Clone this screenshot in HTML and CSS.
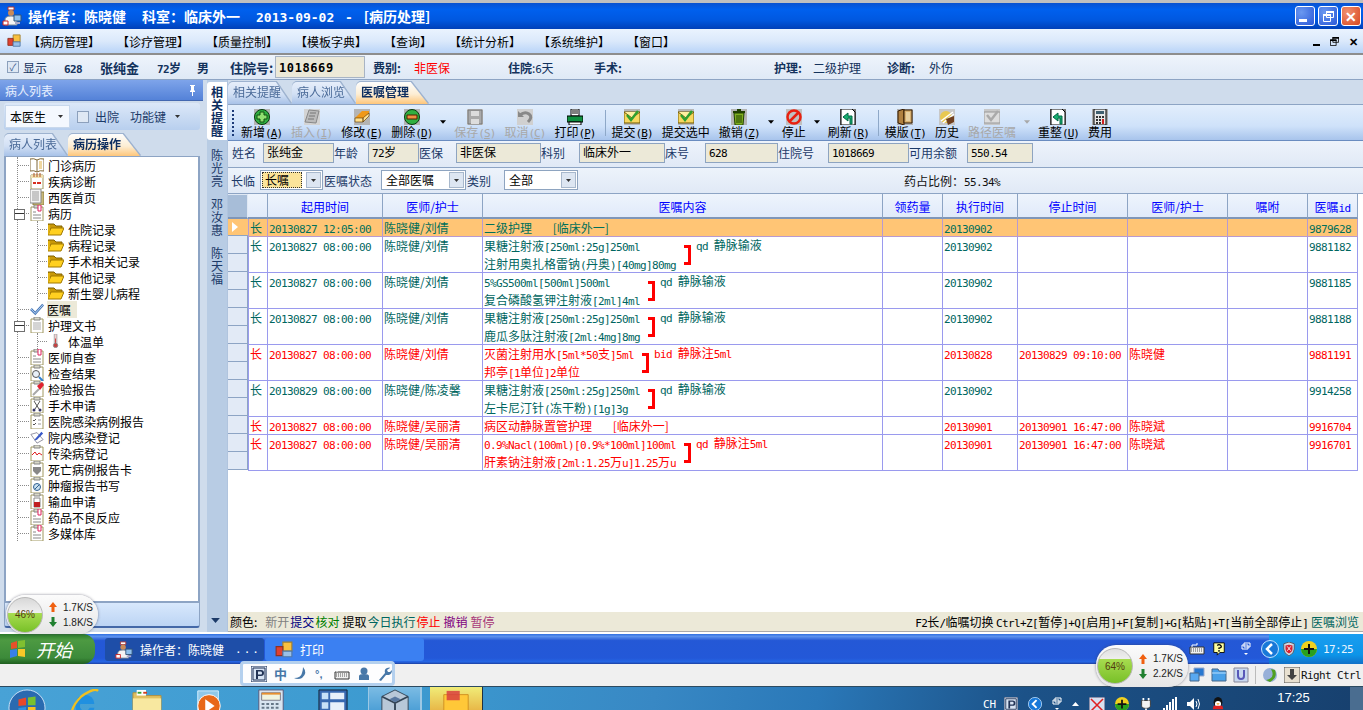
FILE: index.html
```html
<!DOCTYPE html>
<html lang="zh-CN">
<head>
    <meta charset="UTF-8">
    <title>病历处理</title>
    <link rel="stylesheet" href="styles.css">
</head>
<body>

<svg class="defs" width="0" height="0">
    <symbol id="i-doctor" viewBox="0 0 20 20"><path d="M6 1h6v3H6z" fill="#fff" stroke="#a33"/><circle cx="9" cy="7" r="3" fill="#c88a58"/><path d="M3 19v-5q0-4 6-4t6 4v5z" fill="#f4f4f4" stroke="#789"/><path d="M1 15h5v4H1z" fill="#fff" stroke="#c22"/><path d="M12 9h7v6h-7z" fill="#8ec0ee" stroke="#357"/><path d="M13 16h5v2h-5z" fill="#aac"/></symbol>
    <symbol id="i-app" viewBox="0 0 16 16"><path d="M7 1h8v8H7z" fill="#f8c040" stroke="#a08030"/><path d="M1 5h6v8H1z" fill="#e04030" stroke="#903020"/><path d="M7 9h8v5H7z" fill="#9ac0e8" stroke="#5078a8"/></symbol>
    <symbol id="i-arrow" viewBox="0 0 7 4"><path d="M0 0h7L3.500 4z"/></symbol>
    <symbol id="i-restore" viewBox="0 0 11 11"><path d="M3.500.5h7v6h-7zM.5 3.500h7v7h-7z" fill="none" stroke="currentColor"/><path d="M3 0h8v2H3zM0 3h8v2H0z" fill="currentColor"/></symbol>
    <symbol id="i-pin" viewBox="0 0 9 11"><path d="M2 0h5v1H6v4l1 1v1H5v4H4V7H2V6l1-1V1H2z" fill="#fff"/></symbol>
    <symbol id="i-up" viewBox="0 0 8 10"><path d="M4 0l4 5H5.500v5h-3V5H0z"/></symbol>
    <symbol id="i-down" viewBox="0 0 8 10"><path d="M4 10L0 5h2.500V0h3v5H8z"/></symbol>

    <symbol id="t-add" viewBox="0 0 16 16"><path d="M0 0h16v16H0z" fill="#b4b4b4"/><circle cx="8" cy="8" r="7.500" fill="#30b040" stroke="#0a3a10"/><path d="M6 3h4v3h3v4h-3v3H6v-3H3V6h3z" fill="#90e070" stroke="#105010"/></symbol>
    <symbol id="t-insert" viewBox="0 0 16 16"><path d="M0 0h16v16H0z" fill="#d4d4d4"/><path d="M5 1l10 1-3 12L1 13z" fill="#bbb" stroke="#888"/><path d="M6 4h6M5 7h6M4 10h6" stroke="#777"/></symbol>
    <symbol id="t-edit" viewBox="0 0 16 16"><path d="M0 0h16v16H0z" fill="#b4b4b4"/><path d="M1 9l7-7h7v5l-6 6H1z" fill="#f09818"/><path d="M1 9h8v4H1zM9 9l6-5v3l-6 6z" fill="#ffe090" stroke="#553300" stroke-width=".6"/></symbol>
    <symbol id="t-del" viewBox="0 0 16 16"><path d="M0 0h16v16H0z" fill="#b4b4b4"/><circle cx="8" cy="8" r="7.500" fill="#30b040" stroke="#0a3a10"/><path d="M3 6h10v4H3z" fill="#f09040" stroke="#502000"/></symbol>
    <symbol id="t-save" viewBox="0 0 16 16"><path d="M0 0h16v16H0z" fill="#c8c8c8"/><path d="M1 1h14v14H1z" fill="#aaa" stroke="#777"/><path d="M4 2h8v5H4zM4 10h8v5H4z" fill="#ddd"/></symbol>
    <symbol id="t-undo" viewBox="0 0 16 16"><path d="M0 0h16v16H0z" fill="#d0d0d0"/><path d="M3 6q5-4 9-1t-1 8" fill="none" stroke="#888" stroke-width="3"/><path d="M1 2v6h6z" fill="#888"/></symbol>
    <symbol id="t-print" viewBox="0 0 16 16"><path d="M4 0h8v7H4z" fill="#fff" stroke="#000"/><path d="M5 2h6M5 4h6" stroke="#000"/><path d="M0 7h16v6H0z" fill="#109040" stroke="#000"/><path d="M2 13h12v3H2z" fill="#fff" stroke="#000"/></symbol>
    <symbol id="t-submit" viewBox="0 0 16 16"><path d="M0 0h16v16H0z" fill="#b8b8b8"/><path d="M0 3h16v11H0z" fill="#f8d860" stroke="#705800"/><path d="M0 3l8 6 8-6" fill="#fff0a0" stroke="#705800"/><path d="M3 6l4 5 7-9" fill="none" stroke="#30a030" stroke-width="2.500"/></symbol>
    <symbol id="t-trash" viewBox="0 0 16 16"><path d="M0 0h16v16H0z" fill="#b4b4b4"/><path d="M6 0h4v2H6zM2 2h12v2H2z" fill="#204000"/><path d="M3 4h10l-1 12H4z" fill="#80b020" stroke="#204000"/><path d="M6 6v8M8 6v8M10 6v8" stroke="#204000"/></symbol>
    <symbol id="t-stop" viewBox="0 0 16 16"><path d="M0 0h16v16H0z" fill="#c0c0c0"/><circle cx="8" cy="8" r="6.500" fill="none" stroke="#e82010" stroke-width="2.500"/><path d="M3.500 12.500l9-9" stroke="#e82010" stroke-width="2.500"/></symbol>
    <symbol id="t-refresh" viewBox="0 0 16 16"><path d="M0 0h16v16H0z" fill="#777"/><path d="M1 0h11l3 3v13H1z" fill="#fff" stroke="#000"/><path d="M12 15V7H8V4L3 8l5 4V9h2v6z" fill="#18b070" stroke="#064"/></symbol>
    <symbol id="t-book" viewBox="0 0 16 16"><path d="M0 0h16v16H0z" fill="#b0b0b0"/><path d="M1 2l6-2v16l-6-2z" fill="#b08040" stroke="#301800"/><path d="M7 1h8v13H7z" fill="#d8b070" stroke="#301800"/><path d="M9 3h4v9H9z" fill="#e8d0a0"/></symbol>
    <symbol id="t-history" viewBox="0 0 16 16"><path d="M0 0h16v16H0z" fill="#c8c8c8"/><circle cx="7" cy="8" r="6" fill="#e8c850"/><path d="M2 12l12-9M4 14L15 5" stroke="#fff" stroke-width="1.500"/><path d="M7 10l8-3v6l-6 3z" fill="#704020"/></symbol>
    <symbol id="t-route" viewBox="0 0 16 16"><path d="M0 0h16v16H0z" fill="#c8c8c8"/><path d="M0 3h16v11H0z" fill="#ddd" stroke="#999"/><path d="M3 6l4 5 7-9" fill="none" stroke="#aaa" stroke-width="2.500"/></symbol>
    <symbol id="t-calc" viewBox="0 0 16 16"><path d="M0 0h16v16H0z" fill="#aaa"/><path d="M2 0h12v16H2z" fill="#e8e8e8" stroke="#000"/><path d="M4 2h8v3H4z" fill="#406070"/><path d="M4 7h2v2H4zM7 7h2v2H7zM10 7h2v2h-2zM4 10h2v2H4zM7 10h2v2H7zM4 13h2v2H4zM7 13h2v2H7z" fill="#333"/><path d="M10 10h2v5h-2z" fill="#d02020"/></symbol>

    <symbol id="n-clip" viewBox="0 0 14 16"><path d="M1 2h12v14H1z" fill="#fff" stroke="#a09860"/><path d="M4 0h6v3H4z" fill="#d8d8c8" stroke="#888"/></symbol>
    <symbol id="n-book" viewBox="0 0 14 16"><path d="M7 3Q4 1 0 2v12q4-1 7 1 3-2 7-1V2Q10 1 7 3z" fill="#fff" stroke="#806838"/><path d="M7 3v12" stroke="#806838"/><path d="M9 4h3v8H9z" fill="#f0d8a0"/></symbol>
    <symbol id="n-cal" viewBox="0 0 14 16"><path d="M1 2h12v14H1z" fill="#fff" stroke="#a09860"/><path d="M1 2h12v3H1z" fill="#f0e0b0"/><path d="M4 0v4M7 0v4M10 0v4" stroke="#b05020"/><path d="M3 9h3v2H3z" fill="#d83020"/><path d="M7 9h4v2H7z" fill="#d83020"/></symbol>
    <symbol id="n-doc" viewBox="0 0 14 16"><path d="M3 3h11v13H3z" fill="#c8b878" stroke="#908040"/><path d="M0 0h11v14H0z" fill="#f4f4f4" stroke="#888"/><path d="M2 3h7M2 5h7M2 7h7M2 9h7M2 11h7" stroke="#999"/></symbol>
    <symbol id="n-rec" viewBox="0 0 14 16"><use href="#n-clip"/><path d="M3 7h3M3 10h8M3 13h8" stroke="#888"/><path d="M8 0h3v6H8z" fill="#fff" stroke="#e02060"/></symbol>
    <symbol id="n-plain" viewBox="0 0 14 16"><use href="#n-clip"/><path d="M3 6h8M3 8h8M3 10h8M3 12h8" stroke="#aaa"/></symbol>
    <symbol id="n-folder" viewBox="0 0 16 14"><path d="M0 2h6l2 2h6v3H0z" fill="#c89808" stroke="#806000"/><path d="M0 13L3 6h13l-3 7z" fill="#ffd020" stroke="#a07800"/><path d="M0 13V3h2v6z" fill="#e0b010"/></symbol>
    <symbol id="n-check" viewBox="0 0 16 14"><path d="M1 7l5 5L15 2" fill="none" stroke="#4878b8" stroke-width="3"/><path d="M1 7l5 5L15 2" fill="none" stroke="#c0dcf8"/></symbol>
    <symbol id="n-thermo" viewBox="0 0 14 16"><path d="M5 0h3v11H5z" fill="#f4d0d0" stroke="#a8a8a8"/><path d="M6 5h1v7H6z" fill="#d03030"/><circle cx="6.500" cy="13" r="2.500" fill="#c84040" stroke="#888"/></symbol>
    <symbol id="n-search" viewBox="0 0 14 16"><use href="#n-clip"/><circle cx="6" cy="9" r="3.500" fill="#e8f0f8" stroke="#555"/><path d="M9 12l4 4" stroke="#3080d0" stroke-width="2"/></symbol>
    <symbol id="n-pin" viewBox="0 0 14 16"><use href="#n-clip"/><path d="M3 14L9 8" stroke="#a8a8a8" stroke-width="2"/><path d="M7 5l5-4 2 3-4 5z" fill="#e02030"/></symbol>
    <symbol id="n-scissor" viewBox="0 0 14 16"><use href="#n-clip"/><path d="M4 4l5 8M10 4l-5 8" stroke="#555"/><circle cx="4" cy="13" r="1.500" fill="#336"/><circle cx="10" cy="13" r="1.500" fill="#336"/></symbol>
    <symbol id="n-list" viewBox="0 0 14 16"><use href="#n-clip"/><path d="M3 7l1 1 2-2M3 11l1 1 2-2" fill="none" stroke="#555"/><path d="M8 7h3M8 11h3" stroke="#999"/></symbol>
    <symbol id="n-pen" viewBox="0 0 16 16"><path d="M1 5l7-2 7 8-7 4z" fill="#fff" stroke="#889"/><path d="M6 10l7-8 2 2-7 7-3 1z" fill="#3858c8"/></symbol>
    <symbol id="n-wave" viewBox="0 0 14 16"><use href="#n-clip"/><path d="M2 10l3-3 2 3 2-2 3 2" fill="none" stroke="#e02020"/></symbol>
    <symbol id="n-heart" viewBox="0 0 14 16"><use href="#n-clip"/><path d="M3 6h8v4l-4 4-4-4z" fill="#888"/></symbol>
    <symbol id="n-target" viewBox="0 0 14 16"><use href="#n-clip"/><circle cx="7" cy="10" r="3.500" fill="#c8e0f0" stroke="#306090"/><path d="M5 12l4-4" stroke="#306090"/></symbol>
    <symbol id="n-blood" viewBox="0 0 14 16"><use href="#n-clip"/><path d="M4 5h6v9H4z" fill="#fff" stroke="#888"/><path d="M4 9h6v5H4z" fill="#c02020"/></symbol>

    <symbol id="s-kbd" viewBox="0 0 16 12"><path d="M1 4h14v7H1z" fill="#f0f0f0" stroke="#333"/><path d="M2 6h12M2 8h12" stroke="#555" stroke-dasharray="1 1"/><path d="M3 4V2h5V0" fill="none" stroke="#fff"/></symbol>
    <symbol id="s-help" viewBox="0 0 14 16"><path d="M1 1h12v11H8l-3 3v-3H1z" fill="#ffffa0" stroke="#000"/><path d="M5 4q2-2 4 0t-2 3v1M7 9v2" fill="none" stroke="#000" stroke-width="1.500"/></symbol>
    <symbol id="s-restore" viewBox="0 0 10 14"><path d="M3 1h6v4H3zM1 3h6v4H1z" fill="none" stroke="#fff"/><path d="M3 11h4l-2 2z" fill="#fff"/></symbol>
    <symbol id="s-back" viewBox="0 0 18 18"><circle cx="9" cy="9" r="8.500" fill="#1878d8" stroke="#c0e0ff"/><path d="M11 4L6 9l5 5" fill="none" stroke="#fff" stroke-width="2.500"/></symbol>
    <symbol id="s-shield" viewBox="0 0 14 16"><path d="M1 2l6-2 6 2v6q0 5-6 8-6-3-6-8z" fill="#d0d8e0" stroke="#456"/><path d="M3 4l4-1 4 1v4q0 3-4 5-4-2-4-5z" fill="#d82030"/><path d="M5 5l4 5M9 5l-4 5" stroke="#fff"/></symbol>
    <symbol id="s-plus" viewBox="0 0 16 16"><circle cx="8" cy="8" r="8" fill="#f0d020"/><path d="M0 8a8 8 0 0 0 16 0z" fill="#28a020"/><path d="M7 3h2v4h4v2H9v4H7V9H3V7h4z" fill="#111"/></symbol>
    <symbol id="s-net" viewBox="0 0 16 16"><path d="M5 1h10v8H5z" fill="#2878d0" stroke="#9ac"/><path d="M1 6h9v8H1z" fill="#58a8f0" stroke="#468"/></symbol>
    <symbol id="s-share" viewBox="0 0 16 14"><path d="M1 1h6l1 2h7v10H1z" fill="#48a0e8" stroke="#468"/><path d="M1 5h14" stroke="#b8e0ff"/></symbol>
    <symbol id="s-usb" viewBox="0 0 16 16"><path d="M1 1h14v14H1z" fill="#c8d8f0" stroke="#889"/><path d="M5 3v6a3 3 0 0 0 6 0V3" fill="none" stroke="#5858b8" stroke-width="2"/></symbol>
    <symbol id="s-swirl" viewBox="0 0 16 16"><circle cx="8" cy="8" r="7" fill="#98b0d8"/><path d="M4 13Q14 11 9 2l4 1q3 8-5 12z" fill="#50a020"/></symbol>
    <symbol id="s-box" viewBox="0 0 16 16"><path d="M0 0h16v16H0z" fill="#e8e0d0" stroke="#555"/><path d="M6 2h4v6h3l-5 5-5-5h3z" fill="#444"/></symbol>
    <symbol id="s-ime-p" viewBox="0 0 16 16"><path d="M0 0h16v16H0z" fill="#d8e4f4" stroke="#235"/><path d="M2 2h12v12H2z" fill="none" stroke="#235"/><path d="M5 4h5q3 0 3 3t-3 3H7v3H5zM7 5.500v3h3q1 0 1-1.500t-1-1.500z" fill="#235"/></symbol>
    <symbol id="s-moon" viewBox="0 0 14 14"><path d="M9 0q5 6-1 11-4 2-8 0 7 0 8-5 1-3 1-6z" fill="#4878a8"/></symbol>
    <symbol id="s-user" viewBox="0 0 12 14"><circle cx="6" cy="4" r="3.500" fill="#4878a8"/><path d="M1 13V9q0-2 5-2t5 2v4z" fill="#4878a8"/></symbol>
    <symbol id="s-wrench" viewBox="0 0 14 14"><path d="M1 13l6-7q-1-4 2-5t3 0L9 3l1 2 2 0 2-2q0 4-3 5-2 0-3 0l-5 6z" fill="#4878a8"/></symbol>
    <symbol id="s-qq" viewBox="0 0 14 16"><ellipse cx="7" cy="6" rx="5" ry="6" fill="#111"/><ellipse cx="7" cy="8" rx="3.500" ry="3.500" fill="#fff"/><path d="M2 10h10l1 4H1z" fill="#e02020"/><path d="M5 7l2 2 2-2z" fill="#f0a020"/></symbol>
    <symbol id="s-xbox" viewBox="0 0 16 16"><path d="M0 0h16v16H0z" fill="#d8e0f0" stroke="#446"/><path d="M2 2l12 12M14 2L2 14" stroke="#e02020" stroke-width="1.500"/></symbol>
    <symbol id="s-plug" viewBox="0 0 14 16"><path d="M2 4h10v6q0 3-5 3t-5-3z" fill="#f4f4f4" stroke="#333"/><path d="M4 1v3M10 1v3M7 13v3" stroke="#fff" stroke-width="2"/></symbol>
    <symbol id="s-bars" viewBox="0 0 14 14"><path d="M0 11h2v3H0zM3 8h2v6H3zM6 5h2v9H6zM9 2h2v12H9zM12 0h2v14h-2z" fill="#fff"/></symbol>
    <symbol id="s-vol" viewBox="0 0 14 14"><path d="M0 5h3l4-4v12l-4-4H0z" fill="#fff"/><path d="M9 4q2 3 0 6M11 2q3 5 0 10" fill="none" stroke="#fff"/></symbol>

    <symbol id="w-orb" viewBox="0 0 40 40"><circle cx="20" cy="20" r="19" fill="#2a6ab0" stroke="#cfe4f8"/><path d="M11 11l8-2v8l-8 1z" fill="#e8482a"/><path d="M21 9l8-1v9l-8 0z" fill="#78c030"/><path d="M11 20l8-1v8l-8 2z" fill="#3090e0"/><path d="M21 19h8v9l-8-2z" fill="#f8c020"/></symbol>
    <symbol id="w-ie" viewBox="0 0 32 32"><path d="M6 16a10 10 0 0 1 20 0H11a5 5 0 0 0 10 4h5a10 10 0 0 1-20-4z" fill="#2090e0"/><path d="M2 30Q0 20 12 8 26-2 30 2" fill="none" stroke="#f0c020" stroke-width="2.500"/></symbol>
    <symbol id="w-folder" viewBox="0 0 32 32"><path d="M1 4h12l2 3h16v22H1z" fill="#e0c060" stroke="#b09040"/><path d="M1 10h30v19H1z" fill="#f8e8a0"/><path d="M5 1h10v6H5z" fill="#fff"/><path d="M6 3h4v2H6z" fill="#30a030"/><path d="M12 3h4v2h-4z" fill="#d04020"/></symbol>
    <symbol id="w-media" viewBox="0 0 32 32"><path d="M4 2h22v28H4z" fill="#90c8e8" stroke="#d8f0ff"/><circle cx="16" cy="18" r="12" fill="#e86818" stroke="#fff"/><path d="M12 11l10 7-10 7z" fill="#fff"/></symbol>
    <symbol id="w-calc" viewBox="0 0 32 32"><path d="M3 1h26v30H3z" fill="#d8e4f0" stroke="#557"/><path d="M6 4h20v8H6z" fill="#f0f4e0" stroke="#778"/><path d="M6 4h20v2H6z" fill="#e89030"/><path d="M6 15h3v2H6zM11 15h3v2h-3zM16 15h3v2h-3zM21 15h3v2h-3zM6 19h3v2H6zM11 19h3v2h-3zM16 19h3v2h-3zM21 19h3v2h-3z" fill="#678"/></symbol>
    <symbol id="w-exp" viewBox="0 0 32 32"><path d="M1 1h30v30H1z" fill="#3868b0" stroke="#123"/><path d="M4 4h7v7H4zM4 14h7v7H4z" fill="#c8e0f8"/><path d="M13 4h15v7H13zM13 14h15v12H13z" fill="#e8f0fa"/></symbol>
    <symbol id="w-vbox" viewBox="0 0 32 32"><path d="M16 1l14 7v16l-14 7-14-7V8z" fill="#b8c8d8" stroke="#345"/><path d="M2 8l14 7 14-7M16 15v16" fill="none" stroke="#345" stroke-width="2"/><path d="M16 8l6 3-6 3-6-3z" fill="#5878a0"/></symbol>
    <symbol id="w-note" viewBox="0 0 32 32"><path d="M3 6h26v26H3z" fill="#ffc838" stroke="#d09020"/><path d="M6 2h14v10H6z" fill="#d84040" opacity=".85"/></symbol>
</svg>

<div class="app">
    <div class="top-strip"></div>

    <header class="titlebar">
        <svg class="title-icon"><use href="#i-doctor"/></svg>
        <div class="title-text">
            <span>操作者：陈晓健</span><span>科室：临床外一</span><span><code>2013-09-02 - </code>[病历处理]</span>
        </div>
        <div class="win-buttons">
            <span class="win-btn"><i class="glyph-min"></i></span>
            <span class="win-btn"><svg class="glyph-max"><use href="#i-restore"/></svg></span>
            <span class="win-btn close"><i class="glyph-close">✕</i></span>
        </div>
    </header>

    <nav class="menubar">
        <svg class="menu-icon"><use href="#i-app"/></svg>
        <ul class="menu-list">
            <li>【病历管理】</li>
            <li>【诊疗管理】</li>
            <li>【质量控制】</li>
            <li>【模板字典】</li>
            <li>【查询】</li>
            <li>【统计分析】</li>
            <li>【系统维护】</li>
            <li>【窗口】</li>
        </ul>
        <div class="mdi-buttons">
            <i class="mdi-min"></i><svg class="mdi-max"><use href="#i-restore"/></svg><i class="mdi-close">✕</i>
        </div>
    </nav>

    <section class="patient-bar">
        <span class="check checked">✓</span>
        <span>显示</span>
        <b><code>628</code></b>
        <b class="big">张纯金</b>
        <b><code>72</code>岁</b>
        <b>男</b>
        <b class="big">住院号:</b>
        <span class="patient-no"><code>1018669</code></span>
        <b>费别:</b>
        <span class="red">非医保</span>
        <span><b>住院</b>:<code>6</code>天</span>
        <b>手术:</b>
        <b>护理:</b>
        <span>二级护理</span>
        <b>诊断:</b>
        <span>外伤</span>
    </section>

    <main class="workspace">
        <aside class="left-panel">
            <div class="panel-head">病人列表<svg class="pin"><use href="#i-pin"/></svg></div>
            <div class="panel-tools">
                <span class="doctor-combo">本医生<svg class="arrow"><use href="#i-arrow"/></svg></span>
                <span class="check"></span>
                <span>出院</span>
                <span class="fn-key">功能键</span>
                <svg class="arrow"><use href="#i-arrow"/></svg>
            </div>
            <div class="tabs small">
                <span class="tab">病人列表</span>
                <span class="tab active">病历操作</span>
            </div>
            <div class="tree-box">
                <ul class="tree">
                    <li><svg class="node"><use href="#n-book"/></svg>门诊病历</li>
                    <li><svg class="node"><use href="#n-cal"/></svg>疾病诊断</li>
                    <li><svg class="node"><use href="#n-doc"/></svg>西医首页</li>
                    <li class="open"><svg class="node"><use href="#n-rec"/></svg>病历</li>
                    <li class="sub">
                        <ul>
                            <li><svg class="node"><use href="#n-folder"/></svg>住院记录</li>
                            <li><svg class="node"><use href="#n-folder"/></svg>病程记录</li>
                            <li><svg class="node"><use href="#n-folder"/></svg>手术相关记录</li>
                            <li><svg class="node"><use href="#n-folder"/></svg>其他记录</li>
                            <li><svg class="node"><use href="#n-folder"/></svg>新生婴儿病程</li>
                        </ul>
                    </li>
                    <li class="current"><svg class="node"><use href="#n-check"/></svg><span>医嘱</span></li>
                    <li class="open"><svg class="node"><use href="#n-plain"/></svg>护理文书</li>
                    <li class="sub">
                        <ul>
                            <li><svg class="node"><use href="#n-thermo"/></svg>体温单</li>
                        </ul>
                    </li>
                    <li><svg class="node"><use href="#n-rec"/></svg>医师自查</li>
                    <li><svg class="node"><use href="#n-search"/></svg>检查结果</li>
                    <li><svg class="node"><use href="#n-pin"/></svg>检验报告</li>
                    <li><svg class="node"><use href="#n-scissor"/></svg>手术申请</li>
                    <li><svg class="node"><use href="#n-list"/></svg>医院感染病例报告</li>
                    <li><svg class="node"><use href="#n-pen"/></svg>院内感染登记</li>
                    <li><svg class="node"><use href="#n-wave"/></svg>传染病登记</li>
                    <li><svg class="node"><use href="#n-heart"/></svg>死亡病例报告卡</li>
                    <li><svg class="node"><use href="#n-target"/></svg>肿瘤报告书写</li>
                    <li><svg class="node"><use href="#n-blood"/></svg>输血申请</li>
                    <li><svg class="node"><use href="#n-rec"/></svg>药品不良反应</li>
                    <li><svg class="node"><use href="#n-rec"/></svg>多媒体库</li>
                </ul>
            </div>
            <div class="panel-foot"></div>
        </aside>

        <div class="side-tabs">
            <span class="side-tab active">相关提醒</span>
            <span class="side-tab">陈光亮</span>
            <span class="side-tab">邓汝惠</span>
            <span class="side-tab">陈天福</span>
            <svg class="side-scroll"><use href="#i-arrow"/></svg>
        </div>

        <div class="right-pane">
            <div class="tabs">
                <span class="tab">相关提醒</span>
                <span class="tab">病人浏览</span>
                <span class="tab active">医嘱管理</span>
            </div>

            <div class="toolbar">
                <span class="grip"></span>
                <button class="tool"><svg><use href="#t-add"/></svg><span>新增<code>(<u>A</u>)</code></span></button>
                <button class="tool off"><svg><use href="#t-insert"/></svg><span>插入<code>(<u>I</u>)</code></span></button>
                <button class="tool"><svg><use href="#t-edit"/></svg><span>修改<code>(<u>E</u>)</code></span></button>
                <button class="tool"><svg><use href="#t-del"/></svg><span>删除<code>(<u>D</u>)</code></span></button>
                <svg class="drop"><use href="#i-arrow"/></svg>
                <button class="tool off"><svg><use href="#t-save"/></svg><span>保存<code>(<u>S</u>)</code></span></button>
                <button class="tool off"><svg><use href="#t-undo"/></svg><span>取消<code>(<u>C</u>)</code></span></button>
                <button class="tool"><svg><use href="#t-print"/></svg><span>打印<code>(<u>P</u>)</code></span></button>
                <span class="tool-sep"></span>
                <button class="tool"><svg><use href="#t-submit"/></svg><span>提交<code>(<u>B</u>)</code></span></button>
                <button class="tool"><svg><use href="#t-submit"/></svg><span>提交选中</span></button>
                <button class="tool"><svg><use href="#t-trash"/></svg><span>撤销<code>(<u>Z</u>)</code></span></button>
                <svg class="drop"><use href="#i-arrow"/></svg>
                <button class="tool"><svg><use href="#t-stop"/></svg><span>停止</span></button>
                <svg class="drop"><use href="#i-arrow"/></svg>
                <button class="tool"><svg><use href="#t-refresh"/></svg><span>刷新<code>(<u>R</u>)</code></span></button>
                <span class="tool-sep"></span>
                <button class="tool"><svg><use href="#t-book"/></svg><span>模版<code>(<u>T</u>)</code></span></button>
                <button class="tool"><svg><use href="#t-history"/></svg><span>历史</span></button>
                <button class="tool off"><svg><use href="#t-route"/></svg><span>路径医嘱</span></button>
                <svg class="drop off"><use href="#i-arrow"/></svg>
                <button class="tool"><svg><use href="#t-refresh"/></svg><span>重整<code>(<u>U</u>)</code></span></button>
                <button class="tool"><svg><use href="#t-calc"/></svg><span>费用</span></button>
            </div>

            <div class="info-row">
                <label>姓名</label><span class="field">张纯金</span>
                <label>年龄</label><span class="field"><code>72</code>岁</span>
                <label>医保</label><span class="field">非医保</span>
                <label>科别</label><span class="field">临床外一</span>
                <label>床号</label><span class="field"><code>628</code></span>
                <label>住院号</label><span class="field"><code>1018669</code></span>
                <label>可用余额</label><span class="field"><code>550.54</code></span>
            </div>

            <div class="filter-row">
                <label>长临</label>
                <span class="combo hot"><span class="combo-text">长嘱</span><i class="combo-btn"><svg class="arrow"><use href="#i-arrow"/></svg></i></span>
                <label>医嘱状态</label>
                <span class="combo"><span class="combo-text">全部医嘱</span><i class="combo-btn"><svg class="arrow"><use href="#i-arrow"/></svg></i></span>
                <label>类别</label>
                <span class="combo"><span class="combo-text">全部</span><i class="combo-btn"><svg class="arrow"><use href="#i-arrow"/></svg></i></span>
                <span class="ratio">药占比例：<code>55.34%</code></span>
            </div>

            <div class="grid-area">
                <div class="row-heads">
                    <div class="row-corner"></div>
                    <div class="row-current"></div>
                    <div class="row-rest"></div>
                </div>
                <table class="orders">
                    <colgroup>
                        <col class="c-type"><col class="c-start"><col class="c-doc"><col class="c-body"><col class="c-qty">
                        <col class="c-exec"><col class="c-stop"><col class="c-doc2"><col class="c-note"><col class="c-id">
                    </colgroup>
                    <thead>
                        <tr><th></th><th>起用时间</th><th>医师/护士</th><th>医嘱内容</th><th>领药量</th><th>执行时间</th><th>停止时间</th><th>医师/护士</th><th>嘱咐</th><th>医嘱<code>id</code></th></tr>
                    </thead>
                    <tbody>
                        <tr class="one selected">
                            <td>长</td><td><code>20130827 12:05:00</code></td><td>陈晓健/刘倩</td>
                            <td>二级护理 <span class="dept">[临床外一]</span></td>
                            <td></td><td><code>20130902</code></td><td></td><td></td><td></td><td><code>9879628</code></td>
                        </tr>
                        <tr>
                            <td>长</td><td><code>20130827 08:00:00</code></td><td>陈晓健/刘倩</td>
                            <td><div class="group"><div>果糖注射液<code>[250ml:25g]250ml</code><br>注射用奥扎格雷钠<code>(</code>丹奥<code>)[40mg]80mg</code></div><i class="bracket"></i><span class="usage"><code>qd</code> 静脉输液</span></div></td>
                            <td></td><td><code>20130902</code></td><td></td><td></td><td></td><td><code>9881182</code></td>
                        </tr>
                        <tr>
                            <td>长</td><td><code>20130827 08:00:00</code></td><td>陈晓健/刘倩</td>
                            <td><div class="group"><div><code>5%GS500ml[500ml]500ml</code><br>复合磷酸氢钾注射液<code>[2ml]4ml</code></div><i class="bracket"></i><span class="usage"><code>qd</code> 静脉输液</span></div></td>
                            <td></td><td><code>20130902</code></td><td></td><td></td><td></td><td><code>9881185</code></td>
                        </tr>
                        <tr>
                            <td>长</td><td><code>20130827 08:00:00</code></td><td>陈晓健/刘倩</td>
                            <td><div class="group"><div>果糖注射液<code>[250ml:25g]250ml</code><br>鹿瓜多肽注射液<code>[2ml:4mg]8mg</code></div><i class="bracket"></i><span class="usage"><code>qd</code> 静脉输液</span></div></td>
                            <td></td><td><code>20130902</code></td><td></td><td></td><td></td><td><code>9881188</code></td>
                        </tr>
                        <tr class="stopped">
                            <td>长</td><td><code>20130827 08:00:00</code></td><td>陈晓健/刘倩</td>
                            <td><div class="group"><div>灭菌注射用水<code>[5ml*50</code>支<code>]5ml</code><br>邦亭<code>[1</code>单位<code>]2</code>单位</div><i class="bracket"></i><span class="usage"><code>bid</code> 静脉注<code>5ml</code></span></div></td>
                            <td></td><td><code>20130828</code></td><td><code>20130829 09:10:00</code></td><td>陈晓健</td><td></td><td><code>9881191</code></td>
                        </tr>
                        <tr>
                            <td>长</td><td><code>20130829 08:00:00</code></td><td>陈晓健/陈凌馨</td>
                            <td><div class="group"><div>果糖注射液<code>[250ml:25g]250ml</code><br>左卡尼汀针<code>(</code>冻干粉<code>)[1g]3g</code></div><i class="bracket"></i><span class="usage"><code>qd</code> 静脉输液</span></div></td>
                            <td></td><td><code>20130902</code></td><td></td><td></td><td></td><td><code>9914258</code></td>
                        </tr>
                        <tr class="one stopped">
                            <td>长</td><td><code>20130827 08:00:00</code></td><td>陈晓健/吴丽清</td>
                            <td>病区动静脉置管护理 <span class="dept">[临床外一]</span></td>
                            <td></td><td><code>20130901</code></td><td><code>20130901 16:47:00</code></td><td>陈晓斌</td><td></td><td><code>9916704</code></td>
                        </tr>
                        <tr class="stopped">
                            <td>长</td><td><code>20130827 08:00:00</code></td><td>陈晓健/吴丽清</td>
                            <td><div class="group"><div><code>0.9%Nacl(100ml)[0.9%*100ml]100ml</code><br>肝素钠注射液<code>[2ml:1.25</code>万<code>u]1.25</code>万<code>u</code></div><i class="bracket"></i><span class="usage"><code>qd</code> 静脉注<code>5ml</code></span></div></td>
                            <td></td><td><code>20130901</code></td><td><code>20130901 16:47:00</code></td><td>陈晓斌</td><td></td><td><code>9916701</code></td>
                        </tr>
                    </tbody>
                </table>
            </div>

            <footer class="status">
                <div class="legend">
                    <span>颜色:</span>
                    <span class="k-new">新开</span><span class="k-sub">提交</span><span class="k-chk">核对</span>
                    <span class="k-get">提取</span><span class="k-today">今日执行</span><span class="k-stop">停止</span>
                    <span class="k-undo">撤销</span><span class="k-pause">暂停</span>
                </div>
                <div class="hints">
                    <code>F2</code>长<code>/</code>临嘱切换 <code>Ctrl+Z[</code>暂停<code>]+Q[</code>启用<code>]+F[</code>复制<code>]+G[</code>粘贴<code>]+T[</code>当前全部停止<code>]</code>
                    <span class="k-today">医嘱浏览</span>
                </div>
            </footer>
        </div>
    </main>

    <div class="white-gap"></div>

    <div class="xp-taskbar">
        <div class="start-btn">
            <svg class="flag" viewBox="0 0 20 20"><path d="M3 4l6-2v7l-6 1z" fill="#e8502a"/><path d="M10 2l7-1v7l-7 1z" fill="#80c030"/><path d="M2 11l7-1v7l-7 2z" fill="#3880e8"/><path d="M10 10h7v8l-7-1z" fill="#f8c828"/></svg>
            <em>开始</em>
        </div>
        <div class="task-btn active"><svg><use href="#i-doctor"/></svg>操作者：陈晓健 <code>...</code></div>
        <div class="task-btn"><svg><use href="#i-app"/></svg>打印</div>
        <div class="xp-icons">
            <svg class="s16"><use href="#s-kbd"/></svg>
            <svg class="s14"><use href="#s-help"/></svg>
            <svg class="s-rest"><use href="#s-restore"/></svg>
        </div>
        <div class="xp-tray">
            <svg class="s18"><use href="#s-back"/></svg>
            <svg class="s14"><use href="#s-shield"/></svg>
            <svg class="s16"><use href="#s-plus"/></svg>
            <code>17:25</code>
        </div>
    </div>

    <div class="vm-strip">
        <svg class="s16"><use href="#s-net"/></svg>
        <svg class="s16"><use href="#s-share"/></svg>
        <svg class="s16"><use href="#s-usb"/></svg>
        <span class="vm-sep"></span>
        <svg class="s16"><use href="#s-swirl"/></svg>
        <svg class="s16"><use href="#s-box"/></svg>
        <code>Right Ctrl</code>
    </div>

    <div class="win7-bar">
        <div class="app-cell orb"><svg><use href="#w-orb"/></svg></div>
        <div class="app-cell"><svg><use href="#w-ie"/></svg></div>
        <div class="app-cell"><svg><use href="#w-folder"/></svg></div>
        <div class="app-cell"><svg><use href="#w-media"/></svg></div>
        <div class="app-cell"><svg><use href="#w-calc"/></svg></div>
        <div class="app-cell"><svg><use href="#w-exp"/></svg></div>
        <div class="app-cell running"><svg><use href="#w-vbox"/></svg></div>
        <div class="app-cell flash"><svg><use href="#w-note"/></svg></div>
        <div class="w7-tray">
            <code class="lang">CH</code>
            <svg class="s14"><use href="#s-ime-p"/></svg>
            <svg class="s14"><use href="#s-back"/></svg>
            <svg class="s-rest"><use href="#s-restore"/></svg>
            <svg class="s-up" viewBox="0 0 7 4"><path d="M3.500 0L7 4H0z" fill="#fff"/></svg>
            <svg class="s16"><use href="#s-xbox"/></svg>
            <svg class="s14"><use href="#s-plus"/></svg>
            <svg class="s14"><use href="#s-plug"/></svg>
            <svg class="s14"><use href="#s-bars"/></svg>
            <svg class="s14"><use href="#s-vol"/></svg>
            <svg class="s14"><use href="#s-qq"/></svg>
            <span class="clock">17:25</span>
        </div>
    </div>

    <!-- floating bits over the desktop -->
    <div class="net-meter left">
        <div class="gauge low"><span>46%</span></div>
        <div class="rates">
            <div><svg class="rate up"><use href="#i-up"/></svg>1.7K/S</div>
            <div><svg class="rate down"><use href="#i-down"/></svg>1.8K/S</div>
        </div>
    </div>
    <div class="net-meter right">
        <div class="gauge high"><span>64%</span></div>
        <div class="rates">
            <div><svg class="rate up"><use href="#i-up"/></svg>1.7K/S</div>
            <div><svg class="rate down"><use href="#i-down"/></svg>2.2K/S</div>
        </div>
    </div>
    <div class="ime-bar">
        <svg class="ime-p"><use href="#s-ime-p"/></svg>
        <b>中</b>
        <svg class="s14"><use href="#s-moon"/></svg>
        <span class="ime-dots">°,</span>
        <svg class="s-kbd2"><use href="#s-kbd"/></svg>
        <svg class="s14"><use href="#s-user"/></svg>
        <svg class="s14"><use href="#s-wrench"/></svg>
    </div>
</div>

</body>
</html>
```

FILE: styles.css
```css
* {
    box-sizing: border-box;
}

html, body {
    margin: 0;
    height: 100%;
    overflow: hidden;
}

body {
    font-family: "Noto Sans CJK SC", "Liberation Sans", sans-serif;
    font-size: 12px;
    color: #000;
    background: #fff;
}

code {
    font-family: "DejaVu Sans Mono", "Liberation Mono", monospace;
    font-size: 11px;
    letter-spacing: -.62px;
    line-height: 1;
}

ul {
    list-style: none;
    margin: 0;
    padding: 0;
}

.defs {
    position: absolute;
}

.app {
    position: relative;
    width: 1363px;
    height: 710px;
    display: flex;
    flex-direction: column;
    overflow: hidden;
}

.top-strip {
    height: 3px;
    flex: none;
    background: #c0c0c0;
}

/* title bar */
.titlebar {
    height: 26px;
    flex: none;
    display: flex;
    align-items: center;
    padding-left: 2px;
    color: #fff;
    background: linear-gradient(#0a52d0, #0060ee 25%, #0058e0 65%, #0040b8);
}

.title-icon {
    width: 20px;
    height: 20px;
    margin-right: 6px;
}

.title-text {
    display: flex;
    gap: 16px;
    font-size: 14px;
    font-weight: bold;
}

.title-text code {
    font-size: 13px;
    font-weight: bold;
    letter-spacing: 0;
    word-spacing: 3px;
    white-space: pre;
}

.win-buttons {
    margin-left: auto;
    margin-right: 2px;
    display: flex;
    gap: 3px;
}

.win-btn {
    width: 20px;
    height: 20px;
    border: 1px solid #fff;
    border-radius: 3px;
    background: radial-gradient(circle at 30% 30%, #6a98f0, #2a58d8);
    display: flex;
    align-items: center;
    justify-content: center;
}

.win-btn.close {
    background: radial-gradient(circle at 30% 30%, #f09070, #d84820);
}

.glyph-min {
    width: 8px;
    height: 3px;
    background: #fff;
    margin-top: 8px;
    margin-right: 4px;
}

.glyph-max {
    width: 11px;
    height: 11px;
    color: #fff;
}

.glyph-close {
    font-style: normal;
    font-weight: bold;
    font-size: 14px;
    line-height: 1;
    color: #fff;
}

/* menu */
.menubar {
    height: 24px;
    flex: none;
    display: flex;
    align-items: center;
    padding-left: 7px;
    background: linear-gradient(#eaf3fe, #dbe9fb 50%, #b9d4f8);
}

.menu-icon {
    width: 14px;
    height: 14px;
    margin-right: 7px;
}

.menu-list {
    display: flex;
    gap: 17px;
}

.mdi-buttons {
    margin-left: auto;
    margin-right: 5px;
    display: flex;
    align-items: center;
    gap: 10px;
}

.mdi-min {
    width: 7px;
    height: 2px;
    margin-top: 7px;
    background: #000;
}

.mdi-max {
    width: 9px;
    height: 9px;
    color: #000;
}

.mdi-close {
    font-style: normal;
    font-weight: bold;
    font-size: 11px;
    line-height: 1;
}

/* patient strip */
.patient-bar {
    height: 27px;
    flex: none;
    border-top: 2px solid #8d8d8d;
    border-bottom: 1px solid #8da4c4;
    padding-left: 7px;
    display: grid;
    grid-template-columns: 16px 41px 36px 57px 40px 33px 45px 98px 41px 94px 86px 180px 39px 74px 42px auto;
    align-items: center;
    justify-content: start;
    color: #13325c;
    background: linear-gradient(#eef4fc, #dfe9f6);
}

.patient-bar .big {
    font-size: 13px;
}

.patient-bar .red {
    color: #f00;
}

.patient-no {
    width: 90px;
    height: 22px;
    padding-left: 3px;
    background: #ece9d8;
    border: 1px solid #a8b4c4;
    color: #000;
    font-weight: bold;
    line-height: 20px;
}

.patient-no code {
    font-size: 12px;
    letter-spacing: .6px;
}

.check {
    width: 12px;
    height: 12px;
    border: 1px solid #8ca0bc;
    background: #dfe8f4;
    display: inline-block;
    font-size: 10px;
    line-height: 10px;
    text-align: center;
    color: #3a5a90;
}

/* main */
.workspace {
    flex: 1;
    min-height: 0;
    display: flex;
    background: #cfdcec;
}

.left-panel {
    width: 203px;
    padding: 0 3px 0 4px;
    display: flex;
    flex-direction: column;
}

.panel-head {
    height: 21px;
    flex: none;
    margin: 0 -3px 0 -4px;
    padding: 0 6px 0 5px;
    display: flex;
    justify-content: space-between;
    align-items: center;
    color: #e8f0ff;
    background: linear-gradient(#7ea4ea, #5482d8);
    border-bottom: 1px solid #4468b0;
}

.pin {
    width: 9px;
    height: 11px;
}

.panel-tools {
    height: 27px;
    flex: none;
    margin-top: 2px;
    display: flex;
    align-items: center;
    color: #1c3a68;
    background: linear-gradient(#dce8f8, #b8cfee);
    border-radius: 3px;
}

.doctor-combo {
    width: 65px;
    height: 23px;
    margin-left: 1px;
    padding: 0 6px 0 4px;
    background: #f4f8fe;
    border: 1px solid #c8d8ec;
    color: #000;
    display: flex;
    align-items: center;
    justify-content: space-between;
}

.panel-tools .check {
    margin: 0 6px 0 7px;
}

.fn-key {
    margin: 0 9px 0 11px;
}

.arrow {
    width: 5px;
    height: 3px;
    flex: none;
    fill: #333;
}

.tabs {
    height: 24px;
    flex: none;
    display: flex;
    align-items: flex-end;
    gap: 1px;
    padding-top: 1px;
    filter: drop-shadow(1px 0 0 #9db2cf) drop-shadow(0 -1px 0 #9db2cf);
}

.tabs.small {
    height: 22px;
    margin-top: 4px;
    padding-top: 0;
}

.tab {
    height: 22px;
    width: 63px;
    padding: 0 0 0 5px;
    color: #4a6a98;
    line-height: 20px;
    background: linear-gradient(#e6eefa, #d2e0f4 55%, #a8c2e8);
    border-radius: 5px 4px 0 0;
    clip-path: polygon(0 0, 76% 0, 100% 100%, 0 100%);
}

.tab.active {
    width: 72px;
    color: #0d2e60;
    font-weight: bold;
    background: linear-gradient(#fdfdfd, #fdeed4 55%, #fec67a);
}

.tree-box {
    flex: 1;
    min-height: 0;
    background: #fff;
    border: 1px solid #8da4c4;
    border-width: 1px 2px 1px 2px;
    padding: 0 0 0 11px;
}

.tree {
    border-left: 1px dotted #8a8a8a;
}

.tree li {
    display: flex;
    align-items: center;
    height: 16px;
    position: relative;
}

.tree li.sub {
    display: block;
    height: auto;
}

.tree li::before {
    content: "";
    width: 11px;
    flex: none;
    border-top: 1px dotted #8a8a8a;
    margin-right: 1px;
}

.tree li.sub::before {
    display: none;
}

.tree li.open::after {
    content: "";
    position: absolute;
    left: -4px;
    top: 4px;
    width: 9px;
    height: 9px;
    border: 1px solid #707070;
    background: linear-gradient(#fff 3px, #333 3px, #333 4px, #fff 4px);
}

.tree ul {
    margin-left: 19px;
    border-left: 1px dotted #8a8a8a;
}

.tree ul li::before {
    width: 9px;
}

.node {
    width: 14px;
    height: 16px;
    margin-right: 4px;
    flex: none;
}

.tree ul .node {
    width: 16px;
    height: 14px;
    margin-right: 4px;
}

.tree .current span {
    background: #ece9d8;
    padding: 0 6px 0 0;
    margin-left: -1px;
}

.panel-foot {
    height: 26px;
    flex: none;
    margin-bottom: 4px;
    background: linear-gradient(#d8e8fc, #bcd4f4);
    border: 1px solid #8da4c4;
    border-bottom: 2px solid #4468a8;
    border-radius: 0 0 3px 3px;
}

/* side tabs */
.side-tabs {
    width: 25px;
    padding: 2px 1px 0 4px;
    display: flex;
    flex-direction: column;
    gap: 10px;
    position: relative;
    color: #1c3a68;
    border-right: 1px solid #b0c4de;
    background: linear-gradient(90deg, #cfdcec 0 4px, #b8cce4 4px);
}

.side-tab {
    width: 20px;
    text-align: center;
    line-height: 13px;
    padding: 0 4px;
}

.side-tab.active {
    background: #fff;
    color: #0d2e60;
    font-weight: bold;
    padding-top: 3px;
    padding-bottom: 3px;
    margin-bottom: -2px;
    border-radius: 3px 0 0 3px;
}

.side-scroll {
    position: absolute;
    left: 8px;
    bottom: 9px;
    width: 9px;
    height: 5px;
    fill: #1c3a68;
}

/* right part */
.right-pane {
    flex: 1;
    min-width: 0;
    display: flex;
    flex-direction: column;
    background: #cfdcec;
}

.toolbar {
    height: 37px;
    flex: none;
    display: flex;
    align-items: flex-start;
    gap: 9px;
    padding: 4px 0 0 4px;
    background: linear-gradient(#e2eefc, #cfe2fa 60%, #a8c4ec);
    border-top: 1px solid #8da4c4;
    border-bottom: 1px solid #6a8cc0;
}

.grip {
    width: 2px;
    height: 26px;
    margin: 1px -2px 0 0;
    background: repeating-linear-gradient(#1c3a78 0 2px, transparent 2px 4px);
}

.tool {
    font: inherit;
    padding: 0;
    border: 0;
    background: none;
    color: #000;
    display: flex;
    flex-direction: column;
    align-items: center;
}

.tool svg {
    width: 16px;
    height: 16px;
}

.tool span {
    line-height: 14px;
    white-space: nowrap;
}

.tool code {
    letter-spacing: -.95px;
}

.tool u {
    text-underline-offset: 1px;
}

.tool.off {
    color: #a8a8a8;
}

.drop {
    width: 6px;
    height: 4px;
    margin: 11px -1px 0;
    fill: #000;
}

.drop.off {
    fill: #a8a8a8;
}

.tool-sep {
    width: 1px;
    height: 26px;
    margin: 1px -3px 0 0;
    background: #8ea8c8;
}

.info-row,
.filter-row {
    height: 26px;
    flex: none;
    display: grid;
    align-items: center;
    justify-content: start;
    color: #1c3a68;
    background: linear-gradient(#edf3fb, #e0e9f6);
    border-bottom: 1px solid #8da4c4;
}

.info-row {
    height: 27px;
    padding: 2px 0 0 4px;
    align-items: start;
    grid-template-columns: 31px 71px 34px 51px 37px 85px 38px 86px 40px 73px 50px 81px 58px 66px;
}

.info-row label {
    padding-right: 3px;
    line-height: 20px;
}

.info-row .field {
    height: 20px;
    padding: 0 3px;
    background: #ece9d8;
    border: 1px solid #8ea4c0;
    color: #000;
    line-height: 16px;
}

.filter-row {
    padding: 0 0 1px 2px;
    grid-template-columns: 30px 63px 58px 85px 38px 74px auto;
}

.filter-row label {
    white-space: nowrap;
    padding-left: 1px;
}

.combo {
    height: 20px;
    display: flex;
    background: #fff;
    border: 1px solid #8ea4c0;
    padding: 1px;
    color: #000;
}

.combo-text {
    flex: 1;
    padding-left: 3px;
    line-height: 15px;
}

.combo.hot .combo-text {
    background: #fbe49a;
    border: 1px dotted #333;
    flex: none;
    width: 40px;
    padding-left: 2px;
    line-height: 13px;
}

.combo-btn {
    width: 15px;
    margin-left: auto;
    display: flex;
    align-items: center;
    justify-content: center;
    background: #dde6f2;
    border: 1px solid #a8b8cc;
}

.ratio {
    margin-left: 326px;
    white-space: nowrap;
    color: #111;
}

/* orders grid */
.grid-area {
    flex: 1;
    min-height: 0;
    display: flex;
    align-items: flex-start;
    background: #fff;
}

.row-heads {
    width: 20px;
    flex: none;
}

.row-corner {
    height: 25px;
    background: #a7bdd8;
    border: 1px solid #dfe8f4;
    border-bottom: 2px solid #7f96b8;
    border-left: 0;
}

.row-current {
    height: 17px;
    background: #ffc575;
    border-bottom: 1px solid #8da4c4;
    position: relative;
}

.row-current::after {
    content: "";
    position: absolute;
    left: 4px;
    top: 3px;
    border: 5px solid transparent;
    border-left: 6px solid #fff;
    border-right: 0;
}

.row-rest {
    height: 234px;
    background: repeating-linear-gradient(#e2eaf6 0 17px, #8da4c4 17px 18px);
    border-right: 1px solid #8da4c4;
}

.orders {
    width: 1110px;
    table-layout: fixed;
    border-collapse: separate;
    border-spacing: 0;
    line-height: 18px;
}

.c-type { width: 20px; }
.c-start { width: 115px; }
.c-doc { width: 100px; }
.c-body { width: 400px; }
.c-qty { width: 60px; }
.c-exec { width: 75px; }
.c-stop { width: 110px; }
.c-doc2 { width: 100px; }
.c-note { width: 80px; }
.c-id { width: 50px; }

.orders th {
    height: 25px;
    padding: 2px 0 0;
    font-weight: normal;
    line-height: 20px;
    color: #00f;
    background: linear-gradient(#eef4fc, #e0eafa);
    border-right: 1px solid #8da4c4;
    border-bottom: 2px solid #7f96b8;
}

.orders td {
    height: 36px;
    padding: 0 0 0 1px;
    vertical-align: top;
    white-space: nowrap;
    overflow: hidden;
    color: #00665f;
    border-right: 1px solid #9a9aee;
    border-bottom: 1px solid #9a9aee;
}

.orders tr.one td {
    height: 18px;
    line-height: 17px;
}

.orders td:first-child {
    border-left: 1px solid #9a9aee;
}

.orders .selected td {
    background: #ffc575;
    border-color: #b89ad0;
    color: #00705a;
}

.orders .stopped td {
    color: #f00;
}

.dept {
    margin-left: 18px;
}

.group {
    height: 35px;
    display: flex;
    align-items: flex-start;
}

.bracket {
    width: 7px;
    height: 20px;
    margin: 8px 5px 0 8px;
    border: 3px solid #f00;
    border-left: 0;
}

.usage {
    line-height: 16px;
}

.usage code {
    margin-right: 3px;
}

/* status line */
.status {
    height: 20px;
    flex: none;
    display: flex;
    justify-content: space-between;
    align-items: center;
    padding: 0 2px;
    background: #ece9d8;
    border-bottom: 1px solid #aaa;
    white-space: nowrap;
}

.legend {
    display: flex;
}

.legend span {
    margin-right: 1px;
}

.legend span:first-child {
    margin-right: 8px;
}

.k-new { color: #808080; }
.k-sub { color: #000080; }
.k-chk { color: #008000; }
.k-get { color: #000; margin-left: 2px; }
.k-today { color: #00665f; }
.k-stop { color: #f00; }
.k-undo { color: #800080; margin-left: 2px; }
.k-pause { color: #a83878; margin-left: 2px; }

.hints {
    padding-right: 2px;
}

.white-gap {
    height: 2px;
    flex: none;
    background: #fff;
}

/* the xp guest taskbar */
.xp-taskbar {
    height: 30px;
    flex: none;
    display: flex;
    align-items: stretch;
    position: relative;
    color: #fff;
    background: linear-gradient(#2f6fe0, #5c92ee 8%, #2458d6 22%, #2358d8 80%, #2666e4 93%, #1c3fa0);
}

.start-btn {
    width: 95px;
    display: flex;
    align-items: center;
    padding-left: 8px;
    gap: 8px;
    border-radius: 0 12px 12px 0;
    background: linear-gradient(#2a7a2a, #4d9a42 20%, #3c8a3a 80%, #1f5f1f);
}

.flag {
    width: 20px;
    height: 20px;
}

.start-btn em {
    font-size: 18px;
    line-height: 1;
}

.task-btn {
    width: 159px;
    margin: 4px 0 3px 1px;
    padding-left: 10px;
    display: flex;
    align-items: center;
    gap: 7px;
    border-radius: 3px;
    background: #3b80f2;
}

.start-btn + .task-btn {
    margin-left: 10px;
    padding-left: 10px;
    background: #1e4ea8;
}

.task-btn svg {
    width: 18px;
    height: 18px;
}

.task-btn code {
    margin-left: 4px;
    letter-spacing: 2px;
}

.xp-icons {
    margin-left: auto;
    display: flex;
    align-items: center;
    gap: 7px;
    padding-right: 26px;
}

.xp-icons .s-rest {
    margin-left: 8px;
}

.xp-tray {
    width: 94px;
    display: flex;
    align-items: center;
    gap: 3px;
    padding-left: 9px;
    margin-left: -8px;
    background: linear-gradient(#1a9ef0, #0c94e8 70%, #1070c8);
}

.xp-tray .s18 {
    margin-left: -17px;
}

.xp-tray .s16 {
    margin-left: 2px;
}

.xp-tray code {
    margin-left: 3px;
    color: #e8f4ff;
}

.s14 { width: 14px; height: 14px; flex: none; }
.s16 { width: 16px; height: 16px; flex: none; }
.s18 { width: 18px; height: 18px; flex: none; }
.s-rest { width: 10px; height: 14px; flex: none; }
.s-up { width: 7px; height: 4px; flex: none; margin-top: 5px; }
.s-kbd2 { width: 16px; height: 12px; flex: none; }

.vm-strip {
    height: 23px;
    flex: none;
    display: flex;
    align-items: center;
    justify-content: flex-end;
    gap: 6px;
    padding-right: 2px;
    background: #f0f0f0;
    border-bottom: 1px solid #2c4a60;
}

.vm-strip code {
    color: #111;
    margin-left: -5px;
}

.vm-sep {
    width: 1px;
    height: 18px;
    background: #bbb;
}

/* host taskbar */
.win7-bar {
    height: 23px;
    flex: none;
    display: flex;
    overflow: hidden;
    background: linear-gradient(100deg, #48a2d6, #3c9ad0 30%, #3888c4 48%, #2a78b8 60%, #1c5288 75%, #17406e);
}

.app-cell {
    width: 62px;
    flex: none;
    display: flex;
    justify-content: center;
    padding-top: 2px;
}

.app-cell svg {
    width: 30px;
    height: 30px;
    flex: none;
}

.app-cell.orb {
    width: 54px;
}

.app-cell.orb svg {
    width: 38px;
    height: 38px;
}

.app-cell.running {
    width: 54px;
    margin-left: 4px;
    border: 1px solid #9cc8e4;
    border-width: 0 2px 0 1px;
    background: linear-gradient(#7cbce4, #4ea0d6);
}

.app-cell.flash {
    width: 53px;
    margin-left: 8px;
    background: linear-gradient(#f0ec78, #e8b848);
    border-right: 1px solid #203040;
}

.w7-tray {
    margin-left: auto;
    width: 380px;
    display: flex;
    align-items: flex-start;
    gap: 10px;
    padding-top: 10px;
    color: #fff;
    background: linear-gradient(90deg, transparent calc(100% - 13px), #4a6d90 0);
}

.lang {
    letter-spacing: 0;
    margin: 2px -2px 0 0;
}

.clock {
    margin: -6px 0 0 42px;
    font-family: "Liberation Sans", sans-serif;
    font-size: 13px;
    line-height: 13px;
}

/* floating widgets */
.net-meter {
    position: absolute;
    display: flex;
    align-items: center;
    gap: 6px;
    height: 39px;
    width: 92px;
    padding-left: 1px;
    border-radius: 20px;
    background: linear-gradient(#fbfbfb, #e6e6e6);
    box-shadow: 0 0 3px rgba(60, 60, 80, .6);
    font-family: "Liberation Sans", sans-serif;
    font-size: 10px;
    color: #222;
}

.net-meter.left {
    left: 6px;
    top: 595px;
}

.net-meter.right {
    left: 1096px;
    top: 645px;
    height: 42px;
}

.gauge {
    width: 36px;
    height: 36px;
    flex: none;
    border-radius: 50%;
    border: 1px solid #b8b8b8;
    display: flex;
    align-items: center;
    justify-content: center;
    font-size: 10px;
    color: #553a10;
}

.gauge.low {
    background: linear-gradient(#d8d8d8, #f0f0f0 45%, #a8dc50 45%, #78c028);
}

.gauge.high {
    background: linear-gradient(#e0e0e0, #eee 28%, #a8dc50 28%, #78c028);
}

.rates {
    display: flex;
    flex-direction: column;
    gap: 2px;
}

.rates div {
    display: flex;
    align-items: center;
    gap: 6px;
    line-height: 13px;
}

.rate {
    width: 8px;
    height: 10px;
    flex: none;
}

.rate.up { fill: #f06010; }
.rate.down { fill: #208030; }

.ime-bar {
    position: absolute;
    left: 240px;
    top: 661px;
    width: 155px;
    height: 25px;
    padding-left: 8px;
    display: flex;
    align-items: center;
    gap: 7px;
    background: #fdfdfe;
    border: 3px solid #b4d0ee;
    border-radius: 4px;
    color: #4878a8;
}

.ime-p {
    width: 16px;
    height: 16px;
    flex: none;
}

.ime-bar b {
    font-size: 13px;
}

.ime-dots {
    font-family: "Liberation Sans", sans-serif;
    width: 12px;
    font-size: 11px;
    font-weight: bold;
}
```
